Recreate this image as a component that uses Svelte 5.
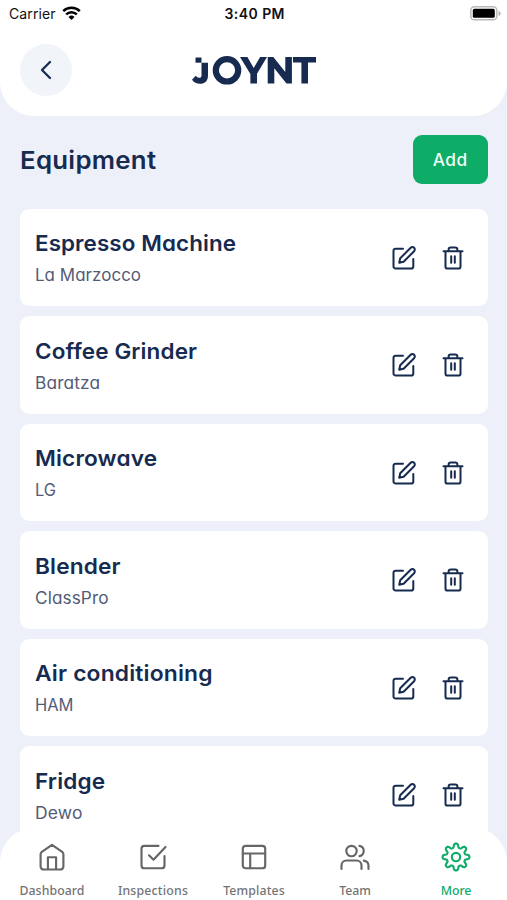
<script>
  const equipment = [
    { name: 'Espresso Machine', brand: 'La Marzocco', nameWidth: 201, brandWidth: 106 },
    { name: 'Coffee Grinder', brand: 'Baratza', nameWidth: 162, brandWidth: 65 },
    { name: 'Microwave', brand: 'LG', nameWidth: 122, brandWidth: 21 },
    { name: 'Blender', brand: 'ClassPro', nameWidth: 85.5, brandWidth: 73.5 },
    { name: 'Air conditioning', brand: 'HAM', nameWidth: 177.5, brandWidth: 38.5 },
    { name: 'Fridge', brand: 'Dewo', nameWidth: 70, brandWidth: 47.5 }
  ];

  const tabs = [
    { label: 'Dashboard', icon: 'home', width: 65 },
    { label: 'Inspections', icon: 'check', width: 70 },
    { label: 'Templates', icon: 'layout', width: 61.5 },
    { label: 'Team', icon: 'team', width: 31.5 },
    { label: 'More', icon: 'gear', width: 30.5 }
  ];

  // Eight-lobed cog outline, sampled from a rounded polar wave.
  const cog = (() => {
    const points = [];
    for (let i = 0; i < 160; i++) {
      const a = (i / 160) * Math.PI * 2;
      const wave = Math.tanh(1.7 * Math.cos(8 * a)) / Math.tanh(1.7);
      const r = 11.4 + 2 * wave;
      points.push(`${(15 + r * Math.sin(a)).toFixed(2)} ${(15 - r * Math.cos(a)).toFixed(2)}`);
    }
    return `M${points.join('L')}Z`;
  })();

  // Tracks the text so that it spans the given width.
  function span(node, width) {
    const natural = node.getBoundingClientRect().width;
    const gaps = Math.max(1, node.textContent.length - 1);
    node.style.letterSpacing = `${(width - natural) / gaps}px`;
  }

  // Widens the letterforms to the given width, with a little tracking.
  function widen(node, width) {
    const natural = node.getBoundingClientRect().width;
    const length = node.textContent.length;
    const tracking = ((width - natural) * 0.25) / length;
    node.style.letterSpacing = `${tracking}px`;
    node.style.transform = `scaleX(${width / (natural + tracking * (length - 1))})`;
  }
</script>

<div class="screen">
  <header>
    <div class="status">
      <div class="carrier">
        <span use:span={46.5}>Carrier</span>
        <svg width="19" height="15" viewBox="0 0 19 15">
          <g fill="none" stroke="#000" stroke-width="2.5">
            <path d="M1.2 5.2a11.8 11.8 0 0 1 16.6 0" />
            <path d="M4.2 8.4a7.5 7.5 0 0 1 10.6 0" />
          </g>
          <path d="M9.5 14 6.5 10.9a4.3 4.3 0 0 1 6 0z" />
        </svg>
      </div>
      <time><span use:span={60}>3:40 PM</span></time>
      <svg class="battery" width="31" height="15" viewBox="0 0 31 15">
        <rect x=".8" y=".8" width="26" height="13" rx="3.6" fill="#fff" stroke="#b9b9b9" stroke-width="1.5" />
        <rect x="2.8" y="2.8" width="22" height="9" rx="1.6" />
        <path d="M28.6 5v5c1.3-.5 2-1.400 2-2.500s-.7-2-2-2.500z" fill="#aaa" />
      </svg>
    </div>
    <div class="bar">
      <button class="back" aria-label="Back">
        <svg width="14" height="20" viewBox="0 0 14 20">
          <path d="M11 2 3 10l8 8" fill="none" stroke="#172b50" stroke-width="2.300" stroke-linecap="round" stroke-linejoin="round" />
        </svg>
      </button>
      <svg class="logo" width="124" height="30" viewBox="0 0 124 30" fill="#172b50" role="img" aria-label="JOYNT">
        <path d="M3.500 2.500h6v5.200h-6z" />
        <path d="M9.500 7.700h6.500v12.800c0 5.500-3 8.300-8 8.300-3.500 0-6.200-1.400-8-4l3.700-4c1 1.300 2.200 2 3.400 2 1.600 0 2.400-.9 2.400-2.600z" />
        <circle cx="35" cy="15.300" r="11.200" fill="none" stroke="#172b50" stroke-width="6.200" />
        <path d="M48 2h7.400l6.300 11 6.400-11H75L65 18.800v9.700h-6.600v-9.600z" />
        <path d="M75.700 2h5.600l12 15V2h6.600v26.500h-5.400L82.300 13.200v15.300h-6.600z" />
        <path d="M101 2h23v5.600h-8v20.900h-6.600V7.600H101z" />
      </svg>
    </div>
  </header>

  <main>
    <div class="heading">
      <h1><span use:widen={136}>Equipment</span></h1>
      <button class="add"><span use:span={34.5}>Add</span></button>
    </div>

    <ul>
      {#each equipment as item}
        <li>
          <div class="info">
            <h2><span use:widen={item.nameWidth}>{item.name}</span></h2>
            <p><span use:widen={item.brandWidth}>{item.brand}</span></p>
          </div>
          <div class="actions">
            <button aria-label="Edit">
              <svg width="26" height="26" viewBox="0 0 26 26">
                <path d="M12 3.700H4.600a2.100 2.100 0 0 0-2.100 2.100v15.600a2.100 2.100 0 0 0 2.100 2.100h15.600a2.100 2.100 0 0 0 2.100-2.100V14" />
                <path d="m9.200 13.300 10.500-10.500a2.350 2.350 0 0 1 3.400 3.400L12.600 16.700l-4.400 1.100z" />
              </svg>
            </button>
            <button aria-label="Delete">
              <svg width="26" height="26" viewBox="0 0 26 26">
                <path d="M3.500 6.300h19M5.500 6.300v15.100a2.200 2.200 0 0 0 2.200 2.200h10.600a2.200 2.200 0 0 0 2.200-2.200V6.300M8.600 6V4.700a2.200 2.200 0 0 1 2.200-2.200h4.400a2.200 2.200 0 0 1 2.200 2.200V6M11.200 11.200v6.600M14.800 11.200v6.600" />
              </svg>
            </button>
          </div>
        </li>
      {/each}
    </ul>
  </main>

  <nav>
    {#each tabs as tab}
      <a class:active={tab.icon === 'gear'} href="#{tab.icon}">
        <svg width="30" height="30" viewBox="0 0 30 30">
          {#if tab.icon === 'home'}
            <path d="M15 2.800 4.800 9.800a3 3 0 0 0-1.200 2.400v12.300a3 3 0 0 0 3 3h16.800a3 3 0 0 0 3-3V12.200a3 3 0 0 0-1.200-2.400zM10.900 27.300V15.200h8.200v12.100" />
          {:else if tab.icon === 'check'}
            <path d="M20.500 3.800H6.300a2.800 2.800 0 0 0-2.800 2.800v16.800a2.800 2.800 0 0 0 2.800 2.800h17.400a2.800 2.800 0 0 0 2.800-2.800V14M11 13.300l4.500 4.400L27.500 5" />
          {:else if tab.icon === 'layout'}
            <rect x="3.800" y="3.800" width="22.400" height="22.400" rx="2.800" />
            <path d="M3.800 11.500h22.400M11.200 11.500v14.700" />
          {:else if tab.icon === 'team'}
            <circle cx="11.500" cy="9" r="5.200" />
            <path d="M1.500 27v-3.500a5 5 0 0 1 5-5h10a5 5 0 0 1 5 5V27M19.500 3.900a5.200 5.200 0 0 1 0 10.200M23.800 18.600c2.900.5 4.700 2.500 4.700 5.200V27" />
          {:else}
            <path d={cog} />
            <circle cx="15" cy="15" r="4.200" />
          {/if}
        </svg>
        <span class="label"><span use:span={tab.width}>{tab.label}</span></span>
      </a>
    {/each}
  </nav>
</div>

<style>
  :global(body) {
    margin: 0;
  }

  .screen {
    position: relative;
    width: 507px;
    height: 900px;
    overflow: hidden;
    background: #edf0f9;
    color: #172b50;
    font-family: Inter, 'Liberation Sans', sans-serif;
    font-feature-settings: 'cv11';
    white-space: nowrap;
  }

  span {
    display: inline-block;
    transform-origin: left center;
  }

  svg {
    display: block;
    flex: none;
  }

  button {
    display: flex;
    align-items: center;
    justify-content: center;
    padding: 0;
    border: 0;
    background: none;
    color: inherit;
    font: inherit;
    font-feature-settings: inherit;
  }

  header {
    height: 115.700px;
    border-radius: 0 0 34px 34px;
    background: #fff;
  }

  .status {
    display: grid;
    grid-template-columns: 1fr auto 1fr;
    align-items: center;
    height: 27px;
    padding: 0 6.500px 0 9px;
    color: #111;
    font-size: 14px;
    font-feature-settings: normal;
  }

  .carrier {
    display: flex;
    align-items: center;
    gap: 6px;
  }

  time {
    font-weight: 600;
  }

  .battery {
    justify-self: end;
  }

  .bar {
    display: grid;
    grid-template-columns: 1fr auto 1fr;
    align-items: center;
    height: 86px;
    padding: 0 20px;
  }

  .back {
    width: 52px;
    height: 52px;
    border-radius: 50%;
    background: #f1f5f9;
  }

  .logo {
    margin-left: 1px;
  }

  .heading {
    display: flex;
    align-items: center;
    justify-content: space-between;
    margin-top: 19.500px;
    padding: 0 19.500px 0 20px;
  }

  h1,
  h2,
  p,
  ul {
    margin: 0;
    padding: 0;
  }

  h1 {
    font-size: 24.500px;
    font-weight: 600;
    line-height: 32px;
  }

  .add {
    width: 74.500px;
    height: 49px;
    border-radius: 9px;
    background: #0dac67;
    color: #f2fff8;
    font-size: 17.300px;
    font-weight: 500;
  }

  ul {
    display: flex;
    flex-direction: column;
    gap: 9.800px;
    margin: 24.500px 19.500px 0 20px;
    list-style: none;
  }

  li {
    display: flex;
    justify-content: space-between;
    box-sizing: border-box;
    height: 97.700px;
    padding: 18.700px 22px 0 15px;
    border-radius: 9.500px;
    background: #fff;
  }

  h2 {
    font-size: 21.800px;
    font-weight: 600;
    line-height: 32px;
  }

  p {
    color: #535b77;
    font-size: 16.600px;
    line-height: 32px;
  }

  .actions {
    display: flex;
    gap: 23px;
    height: 61px;
  }

  .actions svg {
    fill: none;
    stroke: #172b50;
    stroke-width: 2;
    stroke-linecap: round;
    stroke-linejoin: round;
  }

  nav {
    position: absolute;
    right: 0;
    bottom: 0;
    left: 0;
    display: flex;
    box-sizing: border-box;
    height: 72px;
    padding: 14.400px .5px 0 1.500px;
    border-radius: 34px 34px 0 0;
    background: #fff;
  }

  a {
    display: flex;
    flex: 1;
    flex-direction: column;
    align-items: center;
    color: #666;
    text-decoration: none;
  }

  a svg {
    fill: none;
    stroke: currentColor;
    stroke-width: 2.150;
    stroke-linecap: round;
    stroke-linejoin: round;
  }

  .label {
    margin-top: 10.600px;
    color: #747474;
    font-family: 'Noto Sans', sans-serif;
    font-size: 12.300px;
    font-weight: 500;
    line-height: 16px;
  }

  .active,
  .active .label {
    color: #0dac67;
  }
</style>
